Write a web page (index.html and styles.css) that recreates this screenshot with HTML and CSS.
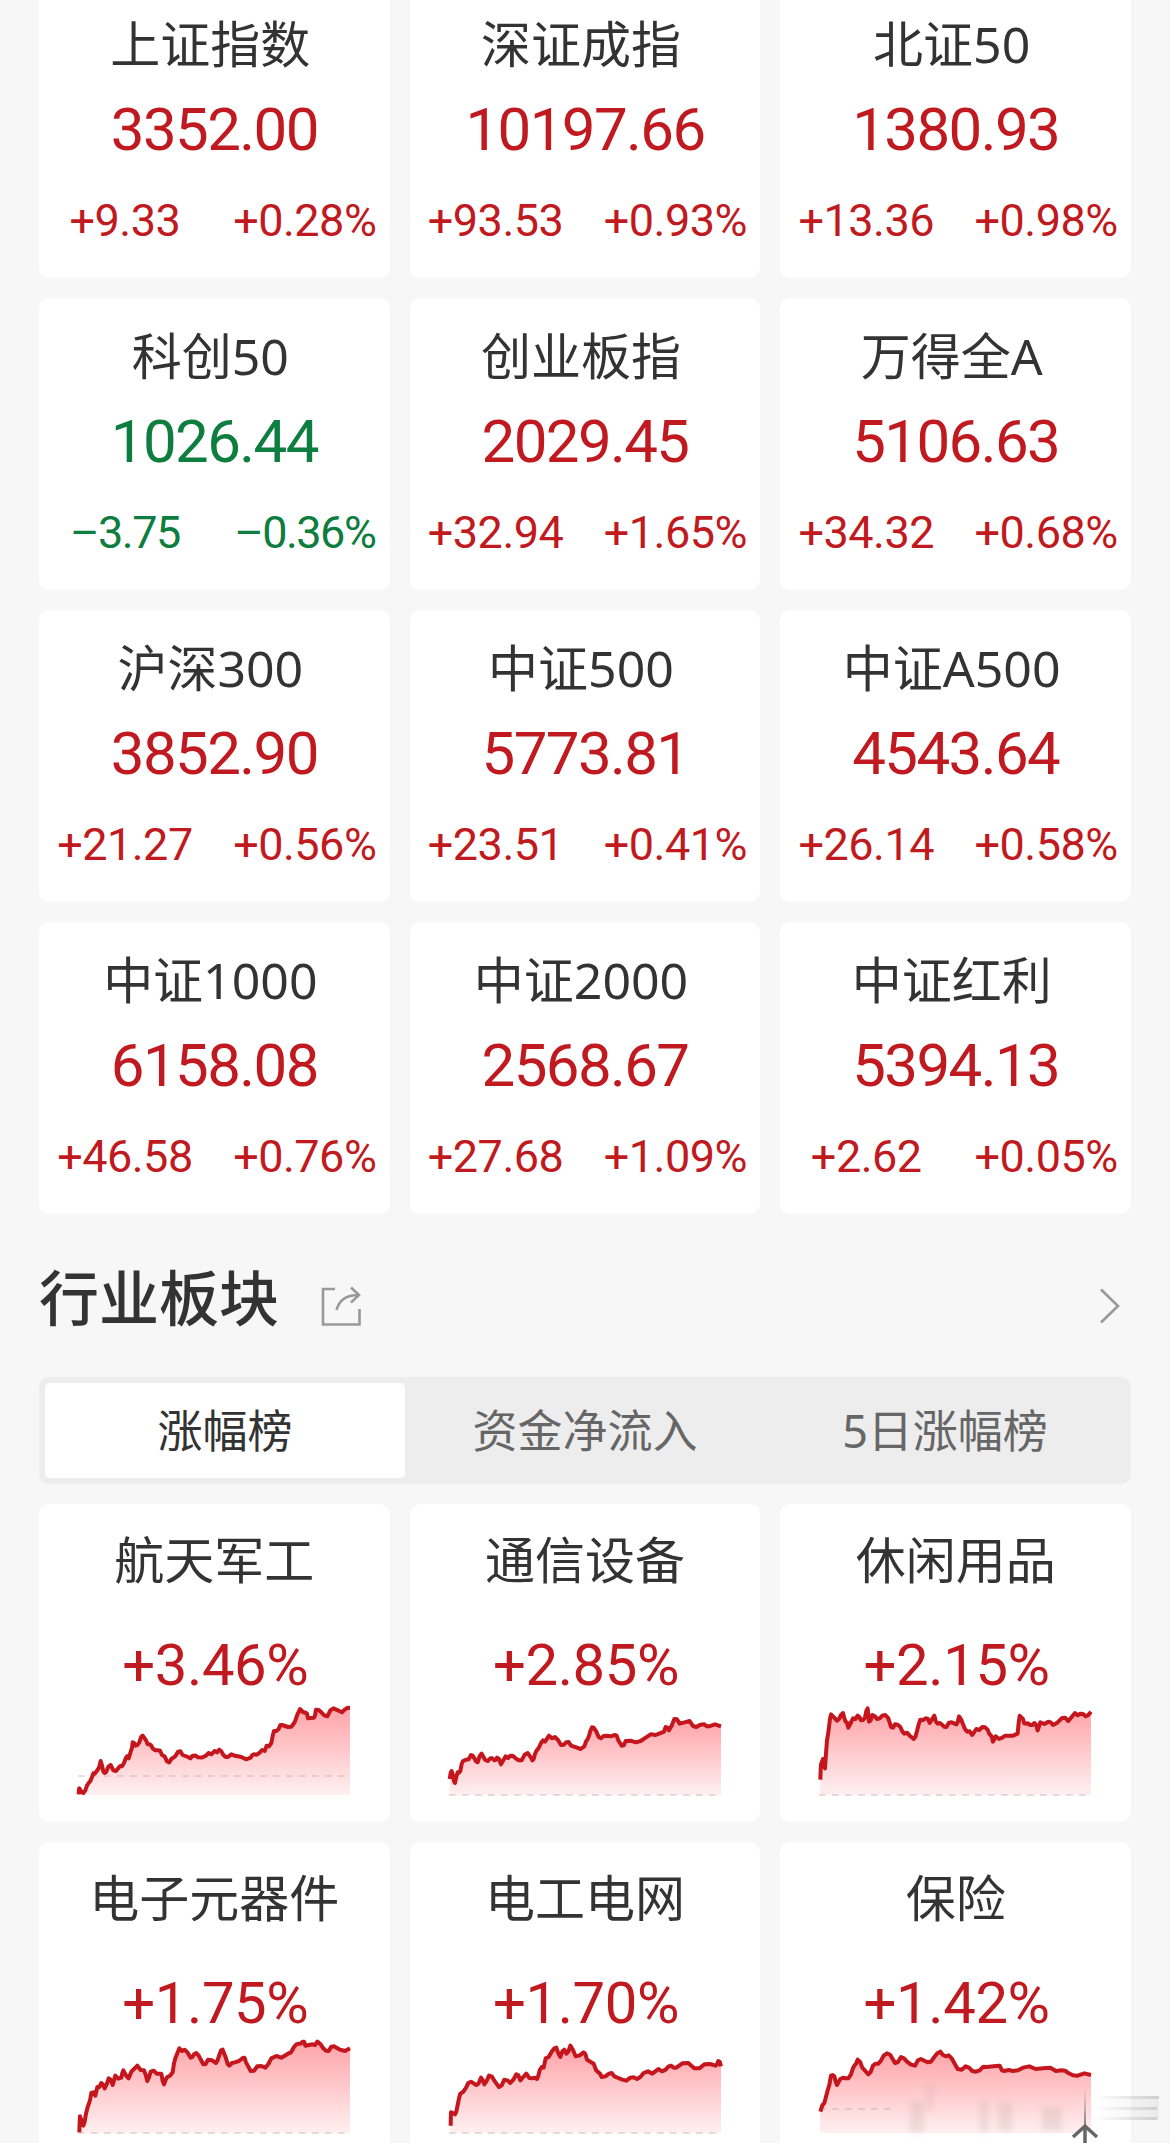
FILE: index.html
```html
<!DOCTYPE html>
<html lang="zh-CN">
<head>
	<meta charset="utf-8">
	<title>行情</title>
	<link rel="stylesheet" href="styles.css">
</head>
<body>
	<main>
		<section class="grid indexes" id="indexes"></section>

		<header class="section-head">
			<h2>行业板块</h2>
			<svg class="share" viewBox="0 0 40 40" fill="none" stroke="#999" stroke-width="2.6">
				<path d="M14 3H2V38.500H38.500V23"/>
				<path d="M15.500 24C18 15 24 9 37 9M30 1.500L38 9L30 16.500"/>
			</svg>
			<svg class="more" viewBox="0 0 22 36" fill="none" stroke="#999" stroke-width="2.600">
				<path d="M2 1.500L19 18L2 34.500"/>
			</svg>
		</header>

		<nav class="tabs">
			<a class="active">涨幅榜</a>
			<a>资金净流入</a>
			<a>5日涨幅榜</a>
		</nav>

		<section class="grid sectors" id="sectors"></section>
	</main>

	<svg class="mark" viewBox="0 0 270 60">
		<defs>
			<filter id="soft"><feGaussianBlur stdDeviation="3"/></filter>
			<linearGradient id="fade" x1="0" x2="1">
				<stop offset="0" stop-color="#ccc" stop-opacity="0"/>
				<stop offset="1" stop-color="#bbb" stop-opacity=".6"/>
			</linearGradient>
			<linearGradient id="stem" x2="0" y2="1">
				<stop offset="0" stop-color="#999" stop-opacity="0"/>
				<stop offset="1" stop-color="#777"/>
			</linearGradient>
		</defs>
		<g fill="#a98" opacity=".2" filter="url(#soft)">
			<rect x="10" y="18" width="14" height="32"/>
			<rect x="28" y="-2" width="5" height="30"/>
			<rect x="80" y="18" width="8" height="32"/>
			<rect x="98" y="20" width="14" height="28"/>
			<rect x="142" y="24" width="20" height="24"/>
		</g>
		<rect x="193" y="13" width="66" height="24" fill="url(#fade)" opacity=".35"/>
		<rect x="193" y="13" width="66" height="3" fill="url(#fade)"/>
		<rect x="193" y="24" width="64" height="3" fill="url(#fade)"/>
		<rect x="193" y="34" width="64" height="3" fill="url(#fade)"/>
		<rect x="184" y="4" width="2" height="40" fill="url(#stem)"/>
		<path d="M173 54L185 43L197 54M185 43V60" stroke="#666" stroke-width="3.500" fill="none"/>
	</svg>

	<script>
		var indexes = [
			['上证指数', '3352.00', '+9.33', '+0.28%'],
			['深证成指', '10197.66', '+93.53', '+0.93%'],
			['北证50', '1380.93', '+13.36', '+0.98%'],
			['科创50', '1026.44', '-3.75', '-0.36%'],
			['创业板指', '2029.45', '+32.94', '+1.65%'],
			['万得全A', '5106.63', '+34.32', '+0.68%'],
			['沪深300', '3852.90', '+21.27', '+0.56%'],
			['中证500', '5773.81', '+23.51', '+0.41%'],
			['中证A500', '4543.64', '+26.14', '+0.58%'],
			['中证1000', '6158.08', '+46.58', '+0.76%'],
			['中证2000', '2568.67', '+27.68', '+1.09%'],
			['中证红利', '5394.13', '+2.62', '+0.05%']
		];

		// base: height of the dashed line, end: where it stops, line: x,y pairs
		var sectors = [
			{ name: '航天军工', rate: '+3.46%', base: 219, end: 816, line: '2,274 4,256 10,266 22,262 32,240 42,222 50,212 58,202 68,174 76,206 84,208 98,186 106,202 122,194 132,190 144,164 152,166 160,140 164,118 172,128 184,118 194,98 204,112 214,124 224,136 240,142 252,156 260,160 274,178 286,164 300,146 314,156 330,162 344,158 360,163 384,158 400,154 410,144 424,140 436,156 450,162 470,158 490,162 518,164 528,154 544,150 560,144 566,128 580,120 588,84 602,78 612,66 630,72 650,58 666,18 684,30 690,46 708,44 714,20 730,28 748,40 766,16 784,24 800,20 816,15' },
			{ name: '通信设备', rate: '+2.85%', base: 276, end: 816, line: '2,228 8,204 12,218 18,240 26,208 34,204 42,174 52,170 66,156 76,166 86,178 98,152 108,170 124,166 136,172 144,164 156,184 170,160 184,158 200,166 218,172 236,150 246,164 254,168 262,144 276,120 288,116 300,98 318,102 336,126 352,118 366,128 384,134 406,130 416,108 424,84 434,74 442,86 456,106 472,98 498,96 508,112 518,128 530,114 560,118 590,104 620,96 640,88 650,72 660,82 676,48 692,62 722,54 742,72 766,64 780,70 816,70' },
			{ name: '休闲用品', rate: '+2.15%', base: 276, end: 816, line: '4,230 6,184 12,168 18,196 24,112 30,72 36,34 48,46 60,48 72,30 80,56 88,74 102,46 116,38 126,52 138,44 146,16 150,56 160,36 174,48 190,38 208,46 216,72 228,64 244,72 256,92 272,98 284,108 294,84 304,50 320,46 332,60 346,38 356,62 368,64 382,72 398,58 412,64 420,40 432,64 444,86 460,96 472,78 490,72 506,80 514,96 522,116 530,100 550,104 568,98 596,92 602,38 612,48 620,62 634,66 646,60 656,82 664,58 688,56 702,66 728,46 748,54 768,30 784,32 800,40 816,26' },
			{ name: '电子元器件', rate: '+1.75%', base: 276, end: 816, line: '4,274 6,226 16,254 24,218 34,184 40,156 52,164 58,138 70,126 80,142 92,112 104,132 112,104 130,110 136,88 152,112 168,84 178,74 198,88 208,120 218,92 236,98 250,98 258,130 268,108 284,94 292,52 304,22 320,26 338,50 348,40 362,44 376,70 390,56 414,66 424,42 434,26 444,52 454,74 470,64 496,50 504,64 518,90 538,76 562,80 580,52 610,50 630,38 648,18 662,8 674,2 682,14 704,10 718,2 736,22 752,30 768,16 786,26 816,22' },
			{ name: '电工电网', rate: '+1.70%', base: 276, end: 816, line: '5,254 6,214 18,220 26,192 34,158 50,142 66,122 82,132 96,110 106,130 120,104 138,122 150,138 166,116 184,126 202,100 214,118 232,98 250,112 264,114 272,88 284,80 290,52 308,32 322,20 334,48 346,26 352,38 364,14 380,46 404,34 414,56 434,68 448,94 458,108 480,98 496,106 520,116 544,110 564,114 584,96 610,98 628,84 650,86 666,74 682,80 718,66 736,82 766,70 800,74 808,60 816,76' },
			{ name: '保险', rate: '+1.42%', base: 204, end: 218, line: '4,212 16,186 26,148 36,104 46,106 54,132 72,110 80,112 96,100 106,74 116,56 130,80 148,100 162,74 178,68 194,44 214,42 228,66 246,48 264,62 288,74 306,54 326,64 346,48 364,32 380,46 398,52 416,84 440,76 460,90 482,88 504,78 542,74 556,90 582,90 612,80 650,84 694,80 728,88 748,96 776,104 816,102' }
		];

		var html = '';
		for (var i = 0; i < indexes.length; i++) {
			var row = indexes[i];
			var down = row[2].charAt(0) == '-';
			html += '<article class="card' + (down ? ' down' : '') + '">' +
				'<h3>' + row[0] + '</h3>' +
				'<p class="value">' + row[1] + '</p>' +
				'<p class="change"><span>' + row[2].replace('-', '–') + '</span><span>' + row[3].replace('-', '–') + '</span></p>' +
				'</article>';
		}
		document.getElementById('indexes').innerHTML = html;

		// adds small ticks between the points so the line looks like minute data
		function roughen(line){
			var pts = line.split(' ');
			var out = [];
			for (var i = 0; i < pts.length; i++) {
				var a = pts[i].split(',').map(Number);
				out.push(pts[i]);
				if (i < pts.length - 1) {
					var b = pts[i + 1].split(',').map(Number);
					var tick = ((i * 7) % 5 - 2) * 3;
					out.push((a[0] + b[0]) / 2 + ',' + ((a[1] + b[1]) / 2 + tick));
				}
			}
			return out.join(' ');
		}

		html = '';
		for (var i = 0; i < sectors.length; i++) {
			var s = sectors[i];
			var line = roughen(s.line);
			html += '<article class="card">' +
				'<h3>' + s.name + '</h3>' +
				'<p class="rate">' + s.rate + '</p>' +
				'<svg class="chart" viewBox="0 0 816 276">' +
				'<linearGradient id="g' + i + '" x2="0" y2="1"><stop offset="0" stop-color="#ffa3a8"/><stop offset="1" stop-color="#fff0f1"/></linearGradient>' +
				'<polygon fill="url(#g' + i + ')" points="' + line + ' 816,276 2,276"/>' +
				'<path class="base" d="M0 ' + s.base + 'H' + s.end + '"/>' +
				'<polyline class="line" points="' + line + '"/>' +
				'</svg></article>';
		}
		document.getElementById('sectors').innerHTML = html;
	</script>
</body>
</html>
```
FILE: styles.css
```css
html,
body{
	height: 2143px;
	margin: 0px;
	overflow: hidden;
}
body{
	background-color: #f7f7f7;
	color: #333;
	font-family: "Noto Sans", "Noto Sans CJK SC", sans-serif;
	position: relative;
}
main{
	margin: -14px 39px 0px 39px;
}
h2, h3, p{
	font-weight: 400;
	margin: 0px;
}
.grid{
	display: grid;
	gap: 20px;
	grid-template-columns: repeat(3, 1fr);
}
.card{
	background-color: #fff;
	border-radius: 10px;
	box-sizing: border-box;
	color: #c01a20;
	text-align: center;
	white-space: nowrap;
}
.card.down{
	color: #0d7d40;
}
.card h3{
	color: #333;
	font-size: 50px;
	line-height: 60px;
}
.value,
.change,
.rate{
	font-family: Roboto, "Noto Sans", sans-serif;
}
.indexes .card{
	height: 292px;
	padding-top: 28px;
}
.indexes h3{
	margin-right: 8px;
}
.value{
	font-size: 60px;
	letter-spacing: -1.6px;
	line-height: 70px;
	margin-top: 21px;
}
.change{
	display: flex;
	font-size: 45px;
	gap: 10px;
	letter-spacing: -.5px;
	line-height: 50px;
	margin: 31px 0px 0px 1px;
}
.down .change{
	letter-spacing: -1.5px;
}
.change span{
	flex: 1 1 0;
	min-width: 0;
}
.section-head{
	align-items: center;
	display: flex;
	height: 163px;
}
.section-head h2{
	font-size: 60px;
	font-weight: 500;
	line-height: 80px;
	padding-top: 5px;
}
.share{
	height: 40px;
	margin: 20px 0px 0px 42px;
	width: 40px;
}
.more{
	height: 36px;
	margin: 20px 10px 0px auto;
	width: 22px;
}
.tabs{
	background-color: #ededed;
	border-radius: 10px;
	box-sizing: border-box;
	display: flex;
	height: 107px;
	margin-bottom: 20px;
	padding: 6px;
}
.tabs a{
	border-radius: 5px;
	color: #666;
	flex: 1 1 0;
	font-size: 45px;
	line-height: 95px;
	text-align: center;
}
.tabs a.active{
	background-color: #fff;
	color: #333;
}
.sectors .card{
	height: 318px;
	padding-top: 26px;
}
.rate{
	font-size: 58px;
	letter-spacing: -.4px;
	line-height: 70px;
	margin: 40px 0px 0px 2px;
}
.chart{
	display: block;
	height: 92px;
	margin: 3px 0px 0px 39px;
	overflow: visible;
	width: 272px;
}
.chart .line{
	fill: none;
	stroke: #c4161c;
	stroke-linejoin: round;
	stroke-width: 12;
}
.chart .base{
	stroke: #b98f92;
	stroke-dasharray: 20 19;
	stroke-opacity: .6;
	stroke-width: 3;
}
.mark{
	bottom: 0px;
	height: 60px;
	position: absolute;
	right: 0px;
	width: 270px;
}
```
